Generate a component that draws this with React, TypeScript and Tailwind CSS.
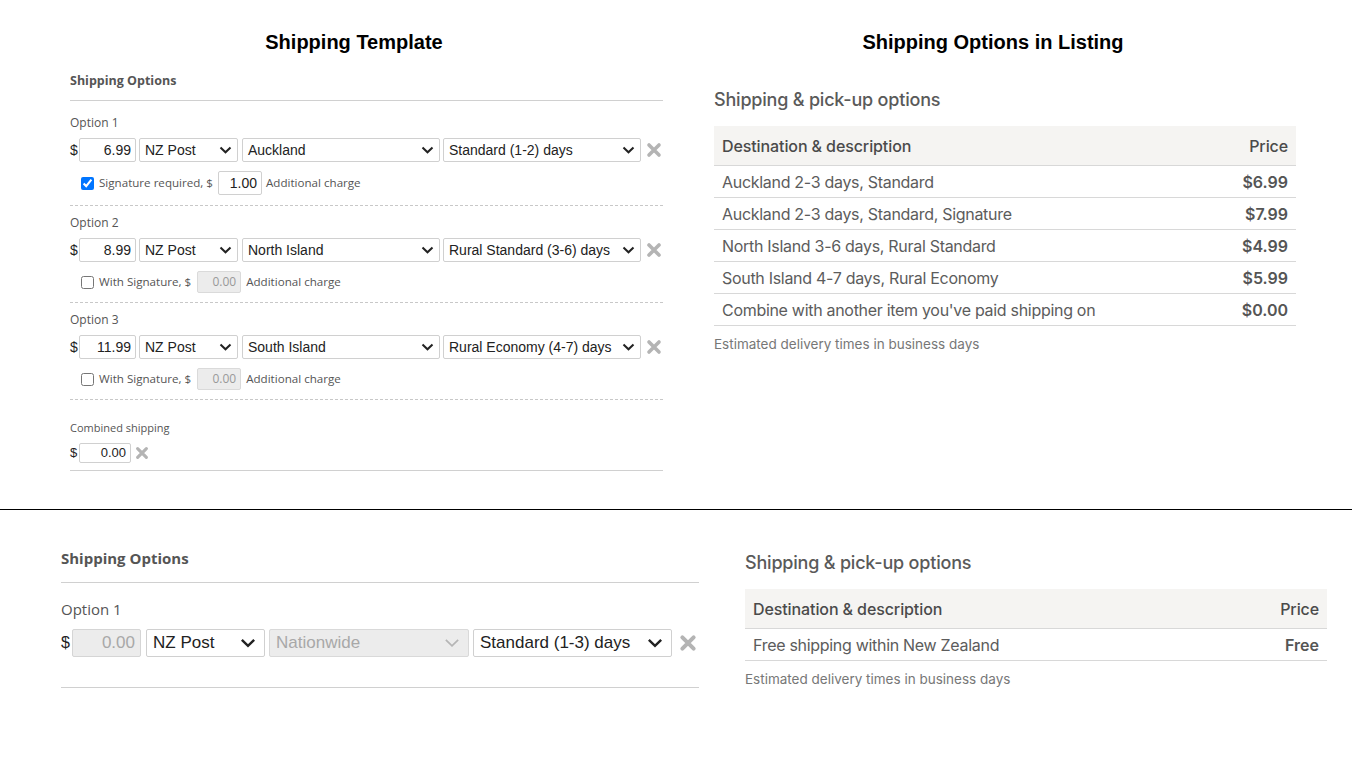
import React from 'react';

interface Opt {
  n: number;
  price: string;
  region: string;
  service: string;
  sig: boolean;
  sigLabel: string;
  sigVal: string;
}

const OPTIONS: Opt[] = [
  { n: 1, price: '6.99', region: 'Auckland', service: 'Standard (1-2) days', sig: true, sigLabel: 'Signature required, $', sigVal: '1.00' },
  { n: 2, price: '8.99', region: 'North Island', service: 'Rural Standard (3-6) days', sig: false, sigLabel: 'With Signature, $', sigVal: '0.00' },
  { n: 3, price: '11.99', region: 'South Island', service: 'Rural Economy (4-7) days', sig: false, sigLabel: 'With Signature, $', sigVal: '0.00' },
];

const LISTING = [
  ['Auckland 2-3 days, Standard', '$6.99'],
  ['Auckland 2-3 days, Standard, Signature', '$7.99'],
  ['North Island 3-6 days, Rural Standard', '$4.99'],
  ['South Island 4-7 days, Rural Economy', '$5.99'],
  ["Combine with another item you've paid shipping on", '$0.00'],
];

function Chevron({ big, muted }: { big?: boolean; muted?: boolean }) {
  return (
    <svg width={big ? 16 : 13} height={big ? 10 : 8} viewBox="0 0 13 8" className="shrink-0">
      <polyline points="1.5,1.5 6.5,6.3 11.5,1.5" fill="none" stroke={muted ? '#b5b5b5' : '#222'} strokeWidth={muted ? 1.4 : 2} />
    </svg>
  );
}

function XIcon({ size = 16 }: { size?: number }) {
  return (
    <svg width={size} height={size} viewBox="0 0 16 16" className="shrink-0">
      <path d="M3 3 L13 13 M13 3 L3 13" stroke="#b4b4b4" strokeWidth="3.6" strokeLinecap="round" />
    </svg>
  );
}

function Select({ w, text, big, disabled }: { w: string; text: string; big?: boolean; disabled?: boolean }) {
  return (
    <div
      className={`${w} ${big ? 'h-[28px] text-[17px] pl-[6px] pr-[8px]' : 'h-[24px] text-[14px] pl-[5px] pr-[5px]'} ${
        disabled ? 'bg-[#ececec] text-[#a8a8a8] border-[#d9d9d9]' : 'bg-white text-[#222] border-[#d0d0d0]'
      } border rounded-[2px] flex items-center justify-between font-['Liberation_Sans',Arial,sans-serif] shrink-0`}
    >
      <span className="whitespace-nowrap">{text}</span>
      <Chevron big={big} muted={disabled} />
    </div>
  );
}

function OptionBlock({ o }: { o: Opt }) {
  const first = o.n === 1;
  return (
    <div>
      <div className={`${first ? 'mt-[14px]' : 'mt-[9px]'} h-[16px] leading-[16px] text-[12px] text-[#555]`}>Option {o.n}</div>
      <div className="mt-[7px] flex items-center">
        <span className="w-[9px] text-[14px] text-[#222] font-['Liberation_Sans',Arial,sans-serif]">$</span>
        <div className="w-[57px] h-[24px] border border-[#d0d0d0] rounded-[2px] text-right pr-[4px] text-[14px] leading-[22px] text-[#222] font-['Liberation_Sans',Arial,sans-serif]">
          {o.price}
        </div>
        <div className="ml-[3px]"><Select w="w-[99px]" text="NZ Post" /></div>
        <div className="ml-[4px]"><Select w="w-[198px]" text={o.region} /></div>
        <div className="ml-[3px]"><Select w="w-[198px]" text={o.service} /></div>
        <div className="ml-[5px]"><XIcon /></div>
      </div>
      <div className={`${first ? 'mt-[9px]' : 'mt-[8px]'} flex items-center h-[24px] text-[11.6px] text-[#555]`}>
        <input type="checkbox" readOnly checked={o.sig} className="ml-[11px] w-[13px] h-[13px]" />
        <span className="ml-[5px]">{o.sigLabel}</span>
        {o.sig ? (
          <div className="ml-[5px] w-[44px] h-[24px] border border-[#d0d0d0] rounded-[2px] text-right pr-[4px] text-[14px] leading-[22px] text-[#222] font-['Liberation_Sans',Arial,sans-serif]">
            {o.sigVal}
          </div>
        ) : (
          <div className="ml-[6px] w-[44px] h-[22px] border border-[#dadada] bg-[#ececec] rounded-[2px] text-right pr-[4px] text-[12px] leading-[20px] text-[#999]">
            {o.sigVal}
          </div>
        )}
        <span className={o.sig ? 'ml-[4px]' : 'ml-[5px]'}>Additional charge</span>
      </div>
      <div className={`${first ? 'mt-[10px]' : 'mt-[8px]'} border-t border-dashed border-[#c8c8c8]`} />
    </div>
  );
}

function ListingPanel({ rows }: { rows: string[][] }) {
  return (
    <div className="w-[582px] font-['Inter',sans-serif]">
      <div className="h-[24px] leading-[24px] text-[18px] font-medium text-[#5a5a5a] tracking-[-0.2px]">Shipping &amp; pick-up options</div>
      <div className="mt-[14px]">
        <div className="h-[40px] bg-[#f5f4f2] border-b border-[#d8d8d8] flex items-center justify-between px-[8px] text-[16px] font-medium text-[#4a4a4a] tracking-[-0.1px]">
          <span>Destination &amp; description</span>
          <span>Price</span>
        </div>
        {rows.map(([d, p]) => (
          <div key={d} className="h-[32px] border-b border-[#d8d8d8] flex items-center justify-between px-[8px] text-[16px] text-[#5c5c5c]">
            <span className="tracking-[-0.3px]">{d}</span>
            <span className="font-semibold text-[#555]">{p}</span>
          </div>
        ))}
      </div>
      <div className="mt-[10px] h-[16px] leading-[16px] text-[13.5px] text-[#777]">Estimated delivery times in business days</div>
    </div>
  );
}

export default function App() {
  return (
    <div className="w-[1352px] h-[760px] bg-white overflow-hidden">
      {/* top comparison */}
      <div className="h-[509px]">
        <div className="flex pt-[30px] h-[54px] font-['Liberation_Sans',Arial,sans-serif] font-bold text-[20px] leading-[24px] text-black">
          <div className="w-[708px] text-center">Shipping Template</div>
          <div className="w-[570px] text-center">Shipping Options in Listing</div>
        </div>
        <div className="flex items-start">
          {/* template editor */}
          <div className="ml-[70px] w-[593px] font-['Open_Sans',sans-serif]">
            <div className="mt-[19px] pb-[11px] border-b border-[#d0d0d0] h-[28px] leading-[16px] text-[12.5px] font-bold text-[#555]">
              Shipping Options
            </div>
            {OPTIONS.map(o => (
              <OptionBlock key={o.n} o={o} />
            ))}
            <div className="mt-[21px] h-[14px] leading-[14px] text-[11px] text-[#555]">Combined shipping</div>
            <div className="mt-[8px] flex items-center">
              <span className="w-[9px] text-[13px] text-[#222] font-['Liberation_Sans',Arial,sans-serif]">$</span>
              <div className="w-[52px] h-[20px] border border-[#d0d0d0] rounded-[2px] text-right pr-[4px] text-[13px] leading-[18px] text-[#222] font-['Liberation_Sans',Arial,sans-serif]">
                0.00
              </div>
              <div className="ml-[4px]"><XIcon size={14} /></div>
            </div>
            <div className="mt-[7px] border-t border-[#d0d0d0]" />
          </div>
          {/* listing view */}
          <div className="ml-[51px] mt-[34px]">
            <ListingPanel rows={LISTING} />
          </div>
        </div>
      </div>

      {/* bottom comparison */}
      <div className="border-t border-black flex items-start">
        <div className="ml-[61px] w-[638px] font-['Open_Sans',sans-serif]">
          <div className="mt-[39px] pb-[15px] border-b border-[#d0d0d0] h-[34px] leading-[18px] text-[15px] font-bold text-[#555]">
            Shipping Options
          </div>
          <div className="mt-[17px] h-[18px] leading-[18px] text-[15px] text-[#555]">Option 1</div>
          <div className="mt-[11px] flex items-center">
            <span className="w-[11px] text-[16px] text-[#222] font-['Liberation_Sans',Arial,sans-serif]">$</span>
            <div className="w-[69px] h-[28px] border border-[#d5d5d5] bg-[#ececec] rounded-[2px] text-right pr-[5px] text-[17px] leading-[26px] text-[#a8a8a8] font-['Liberation_Sans',Arial,sans-serif]">
              0.00
            </div>
            <div className="ml-[5px]"><Select big w="w-[119px]" text="NZ Post" /></div>
            <div className="ml-[4px]"><Select big disabled w="w-[200px]" text="Nationwide" /></div>
            <div className="ml-[4px]"><Select big w="w-[199px]" text="Standard (1-3) days" /></div>
            <div className="ml-[7px]"><XIcon size={18} /></div>
          </div>
          <div className="mt-[30px] border-t border-[#d0d0d0]" />
        </div>
        <div className="ml-[46px] mt-[41px]">
          <ListingPanel rows={[['Free shipping within New Zealand', 'Free']]} />
        </div>
      </div>
    </div>
  );
}
